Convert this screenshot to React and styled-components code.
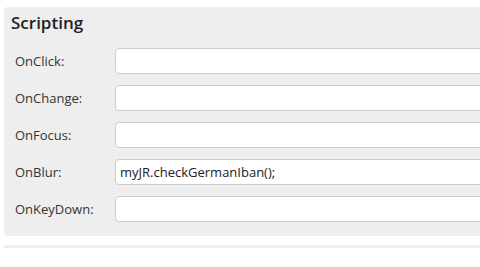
import React from 'react';
import styled, { createGlobalStyle } from 'styled-components';

const GlobalStyle = createGlobalStyle`
  body {
    margin: 0;
    background: #fff;
    font-family: "Open Sans", "Liberation Sans", sans-serif;
    color: #333;
    overflow: hidden;
  }
`

const Page = styled.div`
  padding: 7px 0 0 4px;
  width: 520px;
`

const Panel = styled.section`
  background: #eeeeee;
  border-radius: 4px;
  padding: 4px 0 14px 7px;
`

const Title = styled.h2`
  margin: 0 0 13px;
  font-size: 17px;
  line-height: 24px;
  font-weight: 600;
  color: #222;
`

const Rows = styled.div`
  display: flex;
  flex-direction: column;
  gap: 11px;
  padding-left: 4px;
`

const Row = styled.div`
  display: flex;
  align-items: center;
`

const Label = styled.label`
  width: 100px;
  font-size: 13px;
  color: #333;
`

const Field = styled.input`
  box-sizing: border-box;
  width: 400px;
  height: 26px;
  border: 1px solid #cccccc;
  border-radius: 4px;
  background: #fff;
  padding: 0 4px;
  font-family: inherit;
  font-size: 13px;
  color: #222;
  outline: none;
`

const NextPanel = styled.div`
  margin-top: 9px;
  height: 3px;
  background: #efefef;
  border-radius: 4px 4px 0 0;
`

const FIELDS = [
  { name: 'OnClick', value: '' },
  { name: 'OnChange', value: '' },
  { name: 'OnFocus', value: '' },
  { name: 'OnBlur', value: 'myJR.checkGermanIban();' },
  { name: 'OnKeyDown', value: '' },
];

const App = () => {
  return (
    <Page>
      <GlobalStyle />
      <Panel>
        <Title>Scripting</Title>
        <Rows>
          {FIELDS.map(f => (
            <Row key={f.name}>
              <Label htmlFor={f.name}>{f.name}:</Label>
              <Field id={f.name} defaultValue={f.value} />
            </Row>
          ))}
        </Rows>
      </Panel>
      <NextPanel />
    </Page>
  );
};

export default App;
